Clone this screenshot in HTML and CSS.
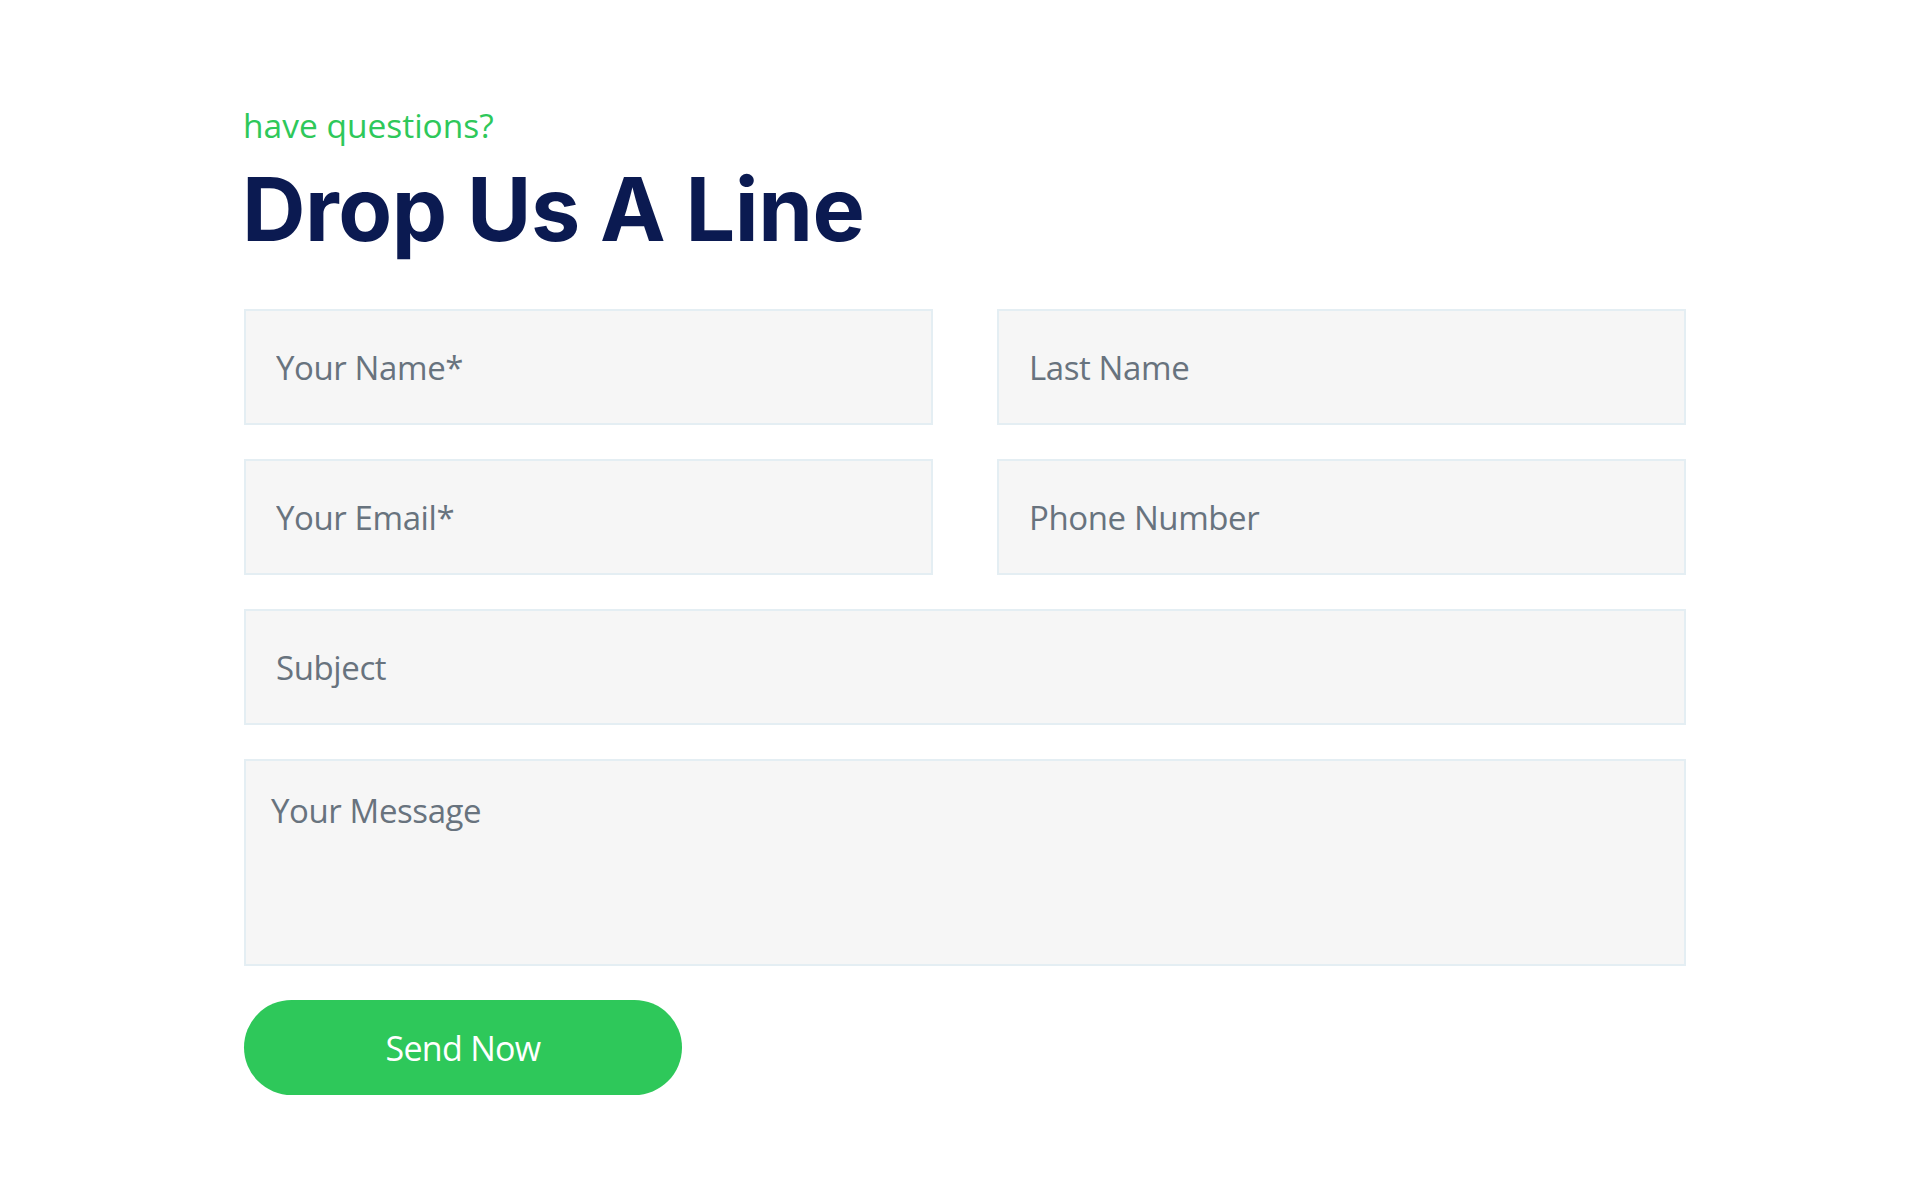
FILE: index.html
```html
<!DOCTYPE html>
<html lang="en">
<head>
<meta charset="utf-8">
<title>Drop Us A Line</title>
<link rel="stylesheet" href="styles.css">
</head>
<body>
<section class="contact">
  <p class="eyebrow">have questions?</p>
  <h1 class="title">Drop Us A Line</h1>
  <form class="form">
    <div class="row">
      <input class="field" type="text" placeholder="Your Name*">
      <input class="field" type="text" placeholder="Last Name">
    </div>
    <div class="row">
      <input class="field" type="email" placeholder="Your Email*">
      <input class="field" type="text" placeholder="Phone Number">
    </div>
    <input class="field" type="text" placeholder="Subject">
    <textarea class="field message" placeholder="Your Message"></textarea>
    <button class="send" type="button">Send Now</button>
  </form>
</section>
</body>
</html>
```
FILE: styles.css
```css
html, body {
  margin: 0;
  padding: 0;
  background: #ffffff;
}

.contact {
  width: 1442px;
  padding: 105px 0 0 244px;
  font-family: "Open Sans", "Liberation Sans", sans-serif;
}

.eyebrow {
  margin: 0 0 0 -1px;
  font-size: 33.5px;
  line-height: 40px;
  color: #2ec85a;
  letter-spacing: 0;
}

.title {
  margin: 14px 0 0 -2px;
  font-family: Inter, "Liberation Sans", sans-serif;
  font-weight: 700;
  font-size: 88px;
  line-height: 100px;
  color: #0b1a51;
  letter-spacing: -0.5px;
}

.form {
  margin-top: 50px;
  display: flex;
  flex-direction: column;
  gap: 34px;
}

.row {
  display: grid;
  grid-template-columns: 1fr 1fr;
  column-gap: 64px;
}

.field {
  box-sizing: border-box;
  width: 100%;
  height: 116px;
  margin: 0;
  padding: 0 30px;
  background: #f6f6f6;
  border: 2px solid #e4eef3;
  border-radius: 0;
  font-family: "Open Sans", "Liberation Sans", sans-serif;
  font-size: 33px;
  color: #5f6b76;
  outline: none;
  letter-spacing: -0.4px;
}

.field::placeholder {
  color: #68737e;
  opacity: 1;
}

.message {
  height: 207px;
  padding: 28px 25px;
  resize: none;
  line-height: 44px;
}

.send {
  width: 438px;
  height: 95px;
  border: none;
  border-radius: 48px;
  background: #2ec85a;
  color: #ffffff;
  font-family: "Open Sans", "Liberation Sans", sans-serif;
  font-size: 34px;
  font-weight: 400;
  letter-spacing: -0.7px;
  cursor: pointer;
}
```
